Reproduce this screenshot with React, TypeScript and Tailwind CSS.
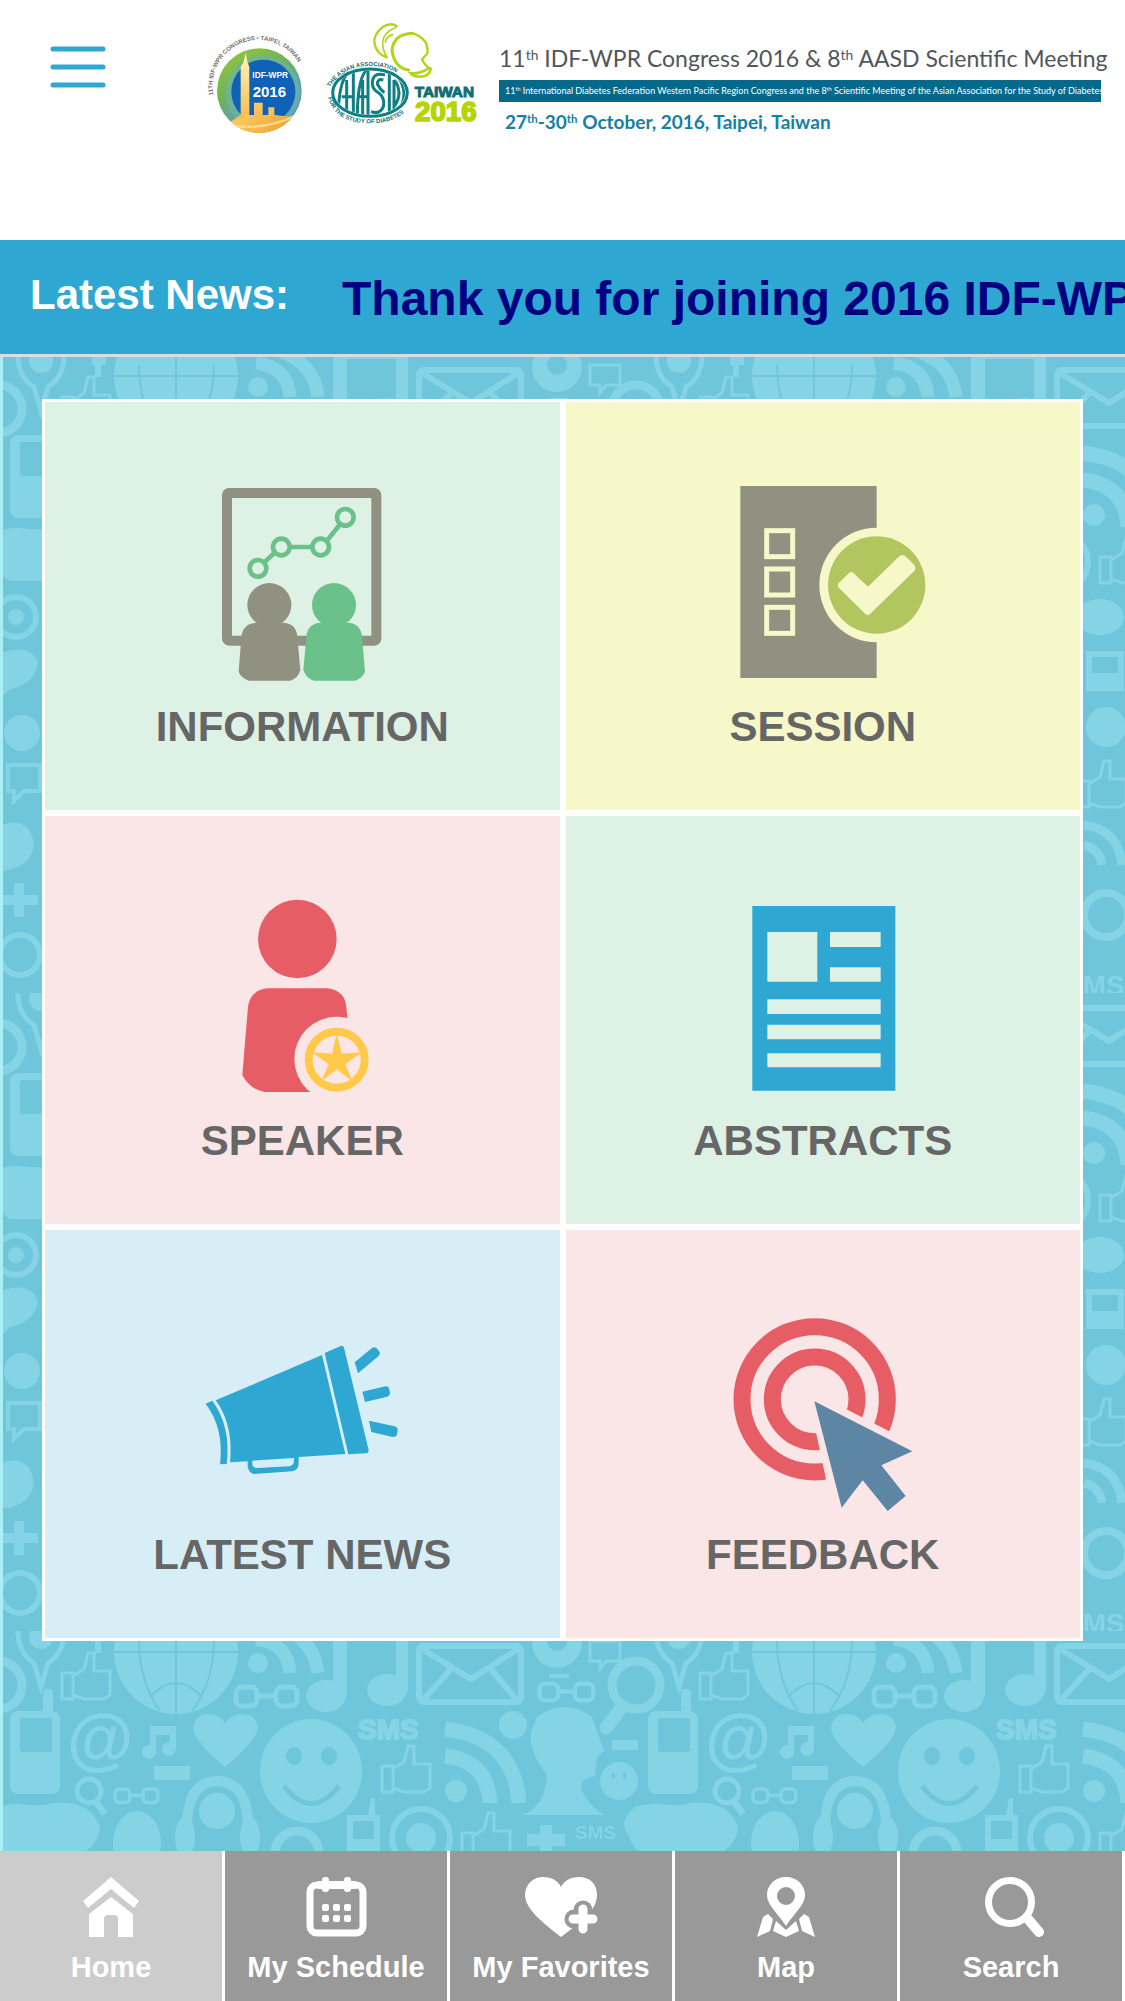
import React from "react";

const Sup = ({ children }: { children: React.ReactNode }) => (
  <sup className="text-[60%] leading-none">{children}</sup>
);

const MenuIcon = () => (
  <svg viewBox="0 0 56 42" className="w-14 h-[42px]" stroke="#2ea8d3" strokeWidth="5" strokeLinecap="round">
    <path d="M3 3H53M3 21H53M3 39H53" />
  </svg>
);

const Logos = () => (
  <svg viewBox="615 60 831 360" className="w-[277px] h-[120px] shrink-0" fontFamily="'Liberation Sans', sans-serif">
    <defs>
      <linearGradient id="ring" x1="0" y1="0" x2="0.6" y2="1">
        <stop offset="0" stopColor="#9ccb3b" />
        <stop offset="0.45" stopColor="#6fb353" />
        <stop offset="0.75" stopColor="#5e9fb0" />
        <stop offset="1" stopColor="#4c8fc0" />
      </linearGradient>
      <linearGradient id="tower" x1="0" y1="0" x2="0" y2="1">
        <stop offset="0" stopColor="#fff6c0" />
        <stop offset="1" stopColor="#f7ab2c" />
      </linearGradient>
      <linearGradient id="sand" x1="0" y1="0" x2="1" y2="0.3">
        <stop offset="0" stopColor="#fbd774" />
        <stop offset="1" stopColor="#f5a12c" />
      </linearGradient>
      <path id="arc" d="M640 285A138 138 0 0 1 912 232" />
      <path id="arcTop" d="M990 262Q1030 198 1110 198Q1195 198 1230 262" />
      <path id="arcBottom" d="M984 292Q1004 370 1110 370Q1215 370 1238 292" />
      <clipPath id="disc"><circle cx="778" cy="272" r="127" /></clipPath>
      <clipPath id="oval"><ellipse cx="1110" cy="278" rx="106" ry="66" /></clipPath>
    </defs>

    {/* IDF-WPR badge */}
    <text fontSize="18" fontWeight="700" fill="#707070">
      <textPath href="#arc">11TH IDF-WPR CONGRESS • TAIPEI, TAIWAN</textPath>
    </text>
    <circle cx="778" cy="272" r="127" fill="url(#ring)" />
    <circle cx="788" cy="278" r="112" fill="#6db3a8" opacity="0.7" />
    <circle cx="790" cy="275" r="96" fill="#0f62b5" />
    <g clipPath="url(#disc)">
      <path d="M690 365L722 345V200L730 188L737 158L743 188L748 200V345H762V308H788V345H805V322H823V345L880 352V410H690Z" fill="url(#tower)" />
      <path d="M660 372Q770 350 720 345L890 352L870 420H680Z" fill="url(#sand)" />
      <path d="M680 375Q790 395 890 345" fill="none" stroke="#fbd98a" strokeWidth="7" />
    </g>
    <text x="757" y="235" fontSize="25" fontWeight="700" fill="#fff">IDF-WPR</text>
    <text x="758" y="292" fontSize="45" fontWeight="700" fill="#fff">2016</text>

    {/* AASD emblem */}
    <ellipse cx="1110" cy="278" rx="112" ry="71" fill="#fff" stroke="#0e7f83" strokeWidth="9" />
    <g fontSize="18" fontWeight="700" fill="#0e7076">
      <text><textPath href="#arcTop">THE ASIAN ASSOCIATION</textPath></text>
      <text><textPath href="#arcBottom">FOR THE STUDY OF DIABETES</textPath></text>
    </g>
    <g clipPath="url(#oval)" fill="none" stroke="#0e7f83" strokeWidth="9">
      <path d="M1015 350Q1015 225 1060 205V350M1025 290H1060M1040 350V240" />
      <path d="M1072 350Q1072 230 1104 205V350M1072 290H1104M1088 350V240" />
      <path d="M1155 225Q1117 215 1117 250Q1117 270 1138 280Q1155 295 1150 320Q1140 345 1113 335M1150 240Q1132 235 1132 252Q1140 268 1153 278" />
      <path d="M1168 215V345Q1212 330 1212 278Q1205 225 1168 215M1182 240V320Q1197 300 1197 278Q1195 252 1182 240" />
    </g>
    <g fill="none" stroke="#b5d418" strokeLinecap="round">
      <path d="M1190 78Q1172 66 1147 82Q1118 106 1124 132Q1130 162 1160 172" strokeWidth="7" />
      <path d="M1188 82Q1150 98 1148 126Q1147 150 1160 170M1178 104Q1160 108 1156 126" strokeWidth="5" />
      <path d="M1238 100Q1180 102 1176 152Q1184 204 1226 210" strokeWidth="9" />
      <path d="M1240 100Q1288 118 1282 160L1266 178Q1276 200 1292 206" strokeWidth="7" />
      <path d="M1292 206Q1290 228 1264 230Q1240 230 1232 220Q1262 222 1284 206" strokeWidth="8" />
    </g>
    <text x="1244" y="290" fontSize="46" fontWeight="700" fill="#0e6f75" stroke="#0e6f75" strokeWidth="3">TAIWAN</text>
    <text x="1245" y="364" fontSize="83" fontWeight="700" fill="#b5d400" stroke="#b5d400" strokeWidth="5">2016</text>
  </svg>
);

const Backdrop = () => (
  <svg className="absolute inset-0 w-full h-full" aria-hidden="true">
    <defs>
      <g id="thumb" fill="none" stroke="#84d4e6" strokeWidth="3">
        <path d="M2 22H13V48H2ZM13 25L24 18L28 2H34V20H50V44L44 48H24L13 44" />
      </g>
      <g id="links" fill="none" stroke="#84d4e6" strokeWidth="5">
        <rect x="3" y="3" width="21" height="19" rx="6" />
        <rect x="43" y="3" width="21" height="19" rx="6" />
        <path d="M24 12H43" />
      </g>
      <pattern id="social" y="-2" width="638" height="638" patternUnits="userSpaceOnUse">
        <rect width="638" height="638" fill="#6fc5da" />
        <g fill="#84d4e6">
          {/* globe */}
          <circle cx="176" cy="21" r="62" />
          <g fill="none" stroke="#72c6da" strokeWidth="2">
            <path d="M112 21H238M176 -40V83M139 10Q139 50 160 80M214 10Q214 50 192 80M150 66Q176 38 202 66" />
          </g>
          {/* pin */}
          <path d="M18 0Q18 22 34 32L41 56L48 32Q64 22 64 0" fill="none" stroke="#84d4e6" strokeWidth="5" />
          <circle cx="41" cy="6" r="12" />
          <use href="#thumb" x="60" y="20" />
          <path d="M92 0h14v10h-5v12h-6v-12h-3z" />
          {/* rss */}
          <circle cx="258" cy="32" r="10" />
          <path d="M256 8Q288 12 290 42M280 -4Q314 8 318 42" fill="none" stroke="#84d4e6" strokeWidth="13" />
          <use href="#links" x="233" y="53" />
          {/* notes */}
          <path d="M333 0H347V65H333ZM396 0H408V60H396ZM340 0H400V4H340Z" />
          <ellipse cx="326" cy="65" rx="20" ry="16" />
          <ellipse cx="387" cy="59" rx="20" ry="16" />
          {/* envelope */}
          <g fill="none" stroke="#84d4e6" strokeWidth="6">
            <rect x="419" y="15" width="102" height="56" rx="5" />
            <path d="M422 18L471 48L518 18M424 68L452 37M516 68L490 37" />
          </g>
          <circle cx="557" cy="12" r="25" />
          <circle cx="557" cy="10" r="10" fill="#6fc5da" />
          <path d="M549 43H569V47H549Z" />
          <use href="#links" transform="translate(537 50) scale(0.88)" />
          <path d="M590 10H620V30H606L600 38V30H590Z" fill="none" stroke="#84d4e6" strokeWidth="3" />
          {/* magnifier, wraps over the tile edge */}
          <g fill="none" stroke="#84d4e6" strokeWidth="9">
            <circle cx="636" cy="54" r="24" />
            <circle cx="-2" cy="54" r="24" />
            <path d="M622 76L606 97" strokeWidth="13" strokeLinecap="round" />
          </g>
          {/* phone */}
          <rect x="10" y="80" width="50" height="83" rx="8" />
          <rect x="43" y="58" width="10" height="30" rx="4" />
          <rect x="20" y="87" width="32" height="34" rx="3" fill="#6fc5da" />
          <text x="67" y="131" fontSize="68" fontWeight="700" fontFamily="'Liberation Sans', sans-serif">@</text>
          <path d="M150 120V95H176V118H170V104H156V122Z" />
          <circle cx="149" cy="121" r="7" />
          <circle cx="169" cy="118" r="7" />
          <path d="M225 136Q193 110 193 96Q196 83 208 83Q220 83 225 92Q231 83 243 83Q256 84 258 96Q257 110 225 136Z" />
          <rect x="154" y="135" width="36" height="14" />
          {/* smiley */}
          <ellipse cx="311" cy="140" rx="51" ry="52" />
          <g fill="#6fc5da">
            <ellipse cx="294" cy="125" rx="8" ry="9" />
            <ellipse cx="329" cy="125" rx="8" ry="9" />
          </g>
          <path d="M284 155Q311 190 339 155" fill="none" stroke="#6fc5da" strokeWidth="5" />
          <g fontFamily="'Liberation Sans', sans-serif" fontWeight="700">
            <text x="358" y="108" fontSize="28" stroke="#84d4e6" strokeWidth="2">SMS</text>
            <text x="575" y="208" fontSize="19">SMS</text>
            <text x="426" y="640" fontSize="28">SMS</text>
          </g>
          <use href="#thumb" x="380" y="113" />
          <circle cx="456" cy="160" r="11" />
          <path d="M445 125Q488 130 490 172M445 98Q514 106 519 172" fill="none" stroke="#84d4e6" strokeWidth="15" />
          <circle cx="513" cy="94" r="14" />
          {/* bust */}
          <path d="M537 86Q565 66 592 86L604 120L597 126L595 145Q578 148 582 160Q588 174 604 184H522Q545 176 547 144Q528 120 531 100Z" />
          <rect x="612" y="109" width="26" height="10" />
          <circle cx="619" cy="150" r="19" />
          <path d="M612 142h3v5h-3zM623 142h3v5h-3z" fill="#6fc5da" />
          <g fill="none" stroke="#84d4e6" strokeWidth="5">
            <circle cx="89" cy="160" r="12" />
            <path d="M96 171L105 183" strokeWidth="7" />
          </g>
          <use href="#links" transform="translate(113 156) scale(0.7)" />
          {/* cloud */}
          <path d="M-13 190Q-8 172 20 173Q42 176 52 172Q90 168 100 196Q98 220 70 226H10Q-10 215 -13 190Z" />
          <path d="M625 190Q630 176 640 174V222Q628 212 625 190Z" />
          <ellipse cx="137" cy="212" rx="24" ry="32" />
          {/* headphones */}
          <circle cx="217" cy="180" r="18" />
          <path d="M187 196Q187 151 217 150Q248 151 248 196" fill="none" stroke="#84d4e6" strokeWidth="10" />
          <ellipse cx="185" cy="206" rx="10" ry="20" />
          <ellipse cx="250" cy="206" rx="10" ry="20" />
          <circle cx="297" cy="222" r="22" fill="none" stroke="#84d4e6" strokeWidth="9" />
          <path d="M347 184H368L371 167H375V184H380V230H347ZM353 190V208H374V190Z" fillRule="evenodd" />
          <circle cx="421" cy="207" r="29" fill="none" stroke="#84d4e6" strokeWidth="6" />
          <circle cx="421" cy="207" r="15" />
          <use href="#thumb" x="460" y="180" />
          <path d="M540 194H552V203H565V215H552V226H540V215H527V203H540Z" />
          <circle cx="638" cy="194" r="14" />
          {/* lower half of the tile */}
          <circle cx="16" cy="262" r="20" fill="none" stroke="#84d4e6" strokeWidth="6" />
          <circle cx="16" cy="262" r="8" />
          <path d="M-4 300Q30 286 38 308Q34 330 10 334L0 344Z" />
          <circle cx="22" cy="378" r="18" />
          <path d="M8 410H40V436H24L14 446V436H8Z" fill="none" stroke="#84d4e6" strokeWidth="4" />
          <path d="M0 470Q30 460 34 490Q30 514 0 516Z" />
          <path d="M0 540H14V528H24V540H38V550H24V562H14V550H0Z" />
          <circle cx="20" cy="600" r="20" fill="none" stroke="#84d4e6" strokeWidth="6" />
          <ellipse cx="462" cy="262" rx="24" ry="18" />
          <path d="M448 296H486V336H448ZM454 302V318H480V302Z" fillRule="evenodd" />
          <circle cx="468" cy="372" r="20" />
          <use href="#thumb" x="438" y="404" />
          <path d="M446 470Q480 474 484 510M446 490Q462 494 464 510" fill="none" stroke="#84d4e6" strokeWidth="9" />
          <circle cx="468" cy="560" r="22" fill="none" stroke="#84d4e6" strokeWidth="8" />
        </g>
      </pattern>
    </defs>
    <rect width="100%" height="100%" fill="url(#social)" />
    <rect width="3" height="100%" fill="#a9eff5" />
  </svg>
);

const InformationIcon = () => (
  <svg viewBox="157 75 720 600" className="w-60 h-[200px]">
    <rect x="292" y="99" width="448" height="443" rx="6" fill="none" stroke="#919181" strokeWidth="30" />
    <g fill="none" stroke="#6ac18a" strokeWidth="14">
      <path d="M402 309L436 277M484 261H544M592 242L632 192" />
      <circle cx="385" cy="325" r="25" />
      <circle cx="455" cy="261" r="25" />
      <circle cx="573" cy="261" r="25" />
      <circle cx="647" cy="172" r="25" />
    </g>
    <g fill="#919181">
      <circle cx="419" cy="435" r="66" />
      <path d="M380 488H460Q500 490 503 530L512 630Q505 655 482 662H358Q335 655 327 635L335 530Q340 490 380 488Z" />
    </g>
    <g fill="#6ac18a">
      <circle cx="613" cy="435" r="66" />
      <path d="M573 488H655Q693 490 697 530L706 635Q698 655 676 662H552Q530 655 521 630L530 530Q534 490 573 488Z" />
    </g>
  </svg>
);

const SessionIcon = () => (
  <svg viewBox="69 75 720 600" className="w-60 h-[200px]">
    <path d="M181 78H590V654H181Z" fill="#919181" />
    <g fill="none" stroke="#f7f8c9" strokeWidth="15">
      <rect x="260" y="212" width="78" height="78" />
      <rect x="260" y="327" width="78" height="78" />
      <rect x="260" y="442" width="78" height="78" />
    </g>
    <circle cx="590" cy="375" r="172" fill="#f7f8c9" />
    <circle cx="590" cy="375" r="146" fill="#b2c55e" />
    <path d="M520 338L564 380L656 290Q667 280 678 290L702 314Q710 324 702 334L570 462Q563 468 556 462L477 384Q470 376 477 368L505 341Q513 333 520 338Z" fill="#f7f8c9" />
  </svg>
);

const SpeakerIcon = () => (
  <svg viewBox="157 57 720 600" className="w-60 h-[200px]">
    <circle cx="503" cy="177" r="118" fill="#e75d65" />
    <path d="M412 325H594Q645 332 650 380L653 415L646 520L560 636H405Q360 628 338 585L355 380Q362 332 412 325Z" fill="#e75d65" />
    <circle cx="621" cy="537" r="127" fill="#fae6e6" />
    <circle cx="621" cy="539" r="84" fill="none" stroke="#ffc94a" strokeWidth="24" />
    <path d="M621 460L636 521L697 517L647 553L668 604L621 568L575 604L597 553L547 517L607 521Z" fill="#ffc94a" />
  </svg>
);

const AbstractsIcon = () => (
  <svg viewBox="69 57 720 600" className="w-60 h-[200px]">
    <path
      fill="#2ea8d3"
      fillRule="evenodd"
      d="M217 78H646V632H217ZM262 156V305H412V156ZM450 156V201H602V156ZM450 262V305H602V262ZM262 358V402H602V358ZM262 434V478H602V434ZM262 520V562H602V520Z"
    />
  </svg>
);

const NewsIcon = () => (
  <svg viewBox="157 39 720 600" className="w-60 h-[200px]" fill="#2ea8d3">
    <path d="M258 301L577 165L647 462L507 471V492Q505 512 487 514L374 522Q357 518 354 500V484L301 487Q312 375 258 301ZM368 482V494Q371 505 384 504L478 499Q491 496 493 485V474Z" fillRule="evenodd" />
    <path d="M228 311L248 302Q305 380 291 492L271 493Q284 385 228 311Z" />
    <path d="M585 159L633 138Q641 136 643 143L717 450Q717 460 709 460L656 463Z" />
    <path d="M675 187L727 144Q736 138 743 146L750 157Q752 163 747 168L685 220Z" />
    <path d="M698 275L767 259Q777 258 779 268L781 280Q780 288 773 290L706 306Z" />
    <path d="M718 362L795 379Q805 382 804 392L801 406Q797 412 789 411L725 396Z" />
  </svg>
);

const FeedbackIcon = () => (
  <svg viewBox="69 39 720 600" className="w-60 h-[200px]">
    <g fill="none" stroke="#e75d65" strokeWidth="51">
      <circle cx="404" cy="298" r="218" />
      <circle cx="404" cy="298" r="127" />
    </g>
    <path d="M380 266L760 462L640 640L460 640Z" fill="#fae6e6" />
    <path d="M403 304L697 454L604 496L677 588L623 633L548 541L485 623Z" fill="#5d86a4" />
  </svg>
);

const HomeIcon = () => (
  <svg viewBox="0 0 80 60" className="w-20 h-[60px]" fill="#fff">
    <path d="M40 0L68 24L63 31L40 12L17 31L12 24Z" />
    <path d="M40 20L62 37V60H47V42Q47 38 43 38H37Q33 38 33 42V60H18V37Z" />
  </svg>
);

const ScheduleIcon = () => (
  <svg viewBox="0 0 80 60" className="w-20 h-[60px]" fill="#fff">
    <rect x="14" y="8" width="53" height="48" rx="7" fill="none" stroke="#fff" strokeWidth="7" />
    <path d="M23 4H36V16H23ZM45 4H58V16H45Z" fill="#999" />
    <rect x="26" y="0" width="7" height="15" rx="3" />
    <rect x="48" y="0" width="7" height="15" rx="3" />
    <path d="M22 4H60V12H22Z" />
    {[26, 37, 48].map((x) => (
      <g key={x}>
        <rect x={x} y="27" width="7" height="7" rx="2" />
        <rect x={x} y="38" width="7" height="7" rx="2" />
      </g>
    ))}
  </svg>
);

const FavoritesIcon = () => (
  <svg viewBox="0 0 80 60" className="w-20 h-[60px]" fill="#fff">
    <path d="M40 60C20 44 4 32 4 17C5 6 13 0 22 0C31 0 37 4 40 10C43 4 49 0 58 0C68 0 76 6 76 18C76 36 54 49 40 60Z" />
    <path d="M62 33V51M53 42H71" stroke="#999" strokeWidth="19" strokeLinecap="round" />
    <path d="M62 32V52M52 42H72" stroke="#fff" strokeWidth="9" strokeLinecap="round" />
  </svg>
);

const MapIcon = () => (
  <svg viewBox="0 0 80 60" className="w-20 h-[60px]" fill="#fff">
    <path fillRule="evenodd" d="M40 0C51 0 59 8 59 18C59 28 49 35 40 49C31 35 21 28 21 18C21 8 29 0 40 0ZM40 10A9 9 0 1 0 40 28A9 9 0 1 0 40 10Z" />
    <path d="M22 37L27 42L24 54L11 60L17 40ZM58 37L53 42L56 54L69 60L63 40ZM30 44L40 53L50 44L53 54L40 60L27 54Z" />
  </svg>
);

const SearchIcon = () => (
  <svg viewBox="0 0 80 60" className="w-20 h-[60px]" fill="none" stroke="#fff">
    <circle cx="39" cy="25" r="21.500" strokeWidth="7" />
    <path d="M57 42L68 55" strokeWidth="10" strokeLinecap="round" />
  </svg>
);

const tiles = [
  { label: "INFORMATION", color: "bg-[#def1e5]", Icon: InformationIcon },
  { label: "SESSION", color: "bg-[#f7f8c9]", Icon: SessionIcon },
  { label: "SPEAKER", color: "bg-[#fae6e6]", Icon: SpeakerIcon },
  { label: "ABSTRACTS", color: "bg-[#def1e5]", Icon: AbstractsIcon },
  { label: "LATEST NEWS", color: "bg-[#d8eef7]", Icon: NewsIcon },
  { label: "FEEDBACK", color: "bg-[#fae6e6]", Icon: FeedbackIcon },
];

const tabs = [
  { label: "Home", Icon: HomeIcon, active: true },
  { label: "My Schedule", Icon: ScheduleIcon },
  { label: "My Favorites", Icon: FavoritesIcon },
  { label: "Map", Icon: MapIcon },
  { label: "Search", Icon: SearchIcon },
];

const App: React.FC = () => {
  return (
    <div className="min-h-screen flex flex-col bg-white font-['Liberation_Sans',Arial,sans-serif]">
      {/* Header */}
      <header className="h-60 flex items-start pl-[50px] pr-6">
        <button type="button" aria-label="Menu" className="mt-[46px] mr-[99px] shrink-0">
          <MenuIcon />
        </button>
        <div className="flex-1 min-w-0 flex items-start gap-[17px] pt-5">
          <Logos />
          <div className="flex-1 min-w-0 pt-4 whitespace-nowrap font-[Lato,sans-serif]">
            <h1 className="h-11 text-[23px] leading-[44px] text-[#4f565c]">
              11<Sup>th</Sup> IDF-WPR Congress 2016 &amp; 8<Sup>th</Sup> AASD Scientific Meeting
            </h1>
            <p className="bg-[#04698b] text-white h-[22px] pl-[6px] text-[9px] leading-[22px]">
              11<Sup>th</Sup> International Diabetes Federation Western Pacific Region Congress and the 8<Sup>th</Sup> Scientific Meeting of the Asian Association for the Study of Diabetes
            </p>
            <p className="pl-[6px] pt-[6px] text-[19px] leading-7 font-bold text-[#1580a1]">
              27<Sup>th</Sup>-30<Sup>th</Sup> October, 2016, Taipei, Taiwan
            </p>
          </div>
        </div>
      </header>

      {/* News ticker */}
      <section className="h-[117px] flex items-center bg-[#2ea8d3] border-b-[3px] border-[#d9dde0] pl-[30px] font-bold whitespace-nowrap overflow-hidden">
        <h2 className="w-[312px] shrink-0 text-[42px] leading-[48px] pb-1 text-white">Latest News:</h2>
        <p className="text-[48px] leading-[56px] pt-1 text-[#000080]">Thank you for joining 2016 IDF-WPR</p>
      </section>

      {/* Tiles */}
      <main className="relative flex-1 px-[42px] pt-[42px] pb-[210px]">
        <Backdrop />
        <div className="relative grid grid-cols-2">
          {tiles.map(({ label, color, Icon }) => (
            <button
              key={label}
              type="button"
              className={`h-[414px] border-[3px] border-white flex flex-col items-center pt-[83px] ${color}`}
            >
              <Icon />
              <span className="mt-[18px] text-[42px] leading-[48px] font-bold text-[#666]">{label}</span>
            </button>
          ))}
        </div>
      </main>

      {/* Bottom tabs */}
      <nav className="grid grid-cols-5 h-[150px]">
        {tabs.map(({ label, Icon, active }) => (
          <a
            key={label}
            href="#"
            className={`flex flex-col items-center pt-[26px] border-r-[3px] border-white ${active ? "bg-[#ccc]" : "bg-[#999]"}`}
          >
            <Icon />
            <span className="mt-3 text-[29px] leading-9 font-bold text-white whitespace-nowrap">{label}</span>
          </a>
        ))}
      </nav>
    </div>
  );
};

export default App;
